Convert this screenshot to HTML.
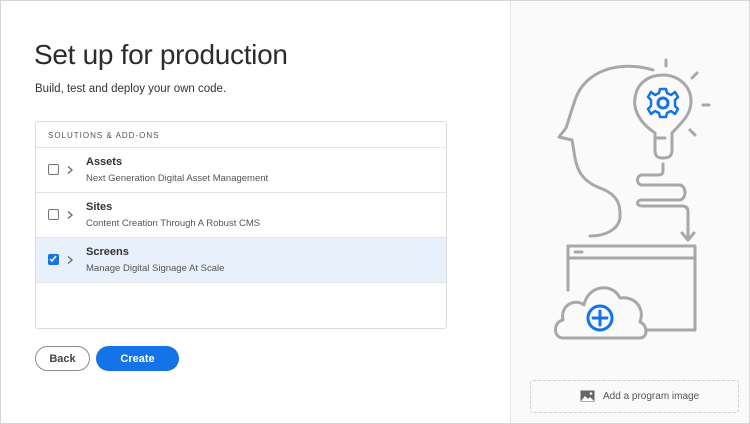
<!DOCTYPE html>
<html><head><meta charset="utf-8"><style>
*{box-sizing:border-box;margin:0;padding:0}
body{width:750px;height:424px;font-family:"Liberation Sans",sans-serif;background:#fff;position:relative;overflow:hidden;color:#2c2c2c}
.frame{position:absolute;left:0;top:0;width:750px;height:424px;border:1px solid #d6d6d6}
.right{position:absolute;left:510px;top:0;width:240px;height:424px;background:#fafafa;border-left:1px solid #e4e4e4}
h1{position:absolute;left:34px;top:39px;font-size:28px;font-weight:300;color:#2c2c2c;letter-spacing:-0.3px}
.sub{position:absolute;left:35px;top:83px;font-size:11.5px;color:#333}
.box{position:absolute;left:35px;top:121px;width:412px;height:208px;border:1px solid #dcdcdc;border-radius:3px;overflow:hidden}
.hd{height:26px;border-bottom:1px solid #e4e4e4;font-size:8px;letter-spacing:1px;color:#555;padding:9px 0 0 12px}
.row{height:45px;border-bottom:1px solid #e4e4e4;position:relative}
.row.sel{background:#e7f0fb}
.cb{position:absolute;left:12px;top:16px;width:11px;height:11px;border:1.5px solid #757575;border-radius:2px;background:#fff}
.sel .cb{background:#1473e6;border-color:#1473e6}
.chev{position:absolute;left:30px;top:17px}
.t{position:absolute;left:50px;top:8px;font-size:11px;font-weight:bold;color:#333}
.d{position:absolute;left:50px;top:25px;font-size:9.5px;color:#555}
.btn{position:absolute;top:346px;height:25px;border-radius:13px;font-size:11px;font-weight:bold;display:flex;align-items:center;justify-content:center}
.back{left:35px;width:55px;border:1.5px solid #8a8a8a;color:#444}
.create{left:96px;width:83px;background:#1473e6;color:#fff}
.dash{position:absolute;left:530px;top:380px;width:209px;height:33px;border:1px dashed #cfcfcf;border-radius:3px;font-size:10px;color:#555;padding:10px 0 0 72px}
</style></head><body>
<div class="right"></div>
<div class="frame"></div>
<h1>Set up for production</h1>
<div class="sub">Build, test and deploy your own code.</div>
<div class="box">
<div class="hd">SOLUTIONS &amp; ADD-ONS</div>
<div class="row"><div class="cb"></div><svg class="chev" width="8" height="10"><path d="M2 1.5L6 5 2 8.5" stroke="#6e6e6e" stroke-width="1.4" fill="none"/></svg><div class="t">Assets</div><div class="d">Next Generation Digital Asset Management</div></div>
<div class="row"><div class="cb"></div><svg class="chev" width="8" height="10"><path d="M2 1.5L6 5 2 8.5" stroke="#6e6e6e" stroke-width="1.4" fill="none"/></svg><div class="t">Sites</div><div class="d">Content Creation Through A Robust CMS</div></div>
<div class="row sel"><div class="cb"><svg width="8" height="8" viewBox="0 0 8 8" style="position:absolute;left:0;top:0"><path d="M1 4l2 2 4-5" stroke="#fff" stroke-width="1.5" fill="none"/></svg></div><svg class="chev" width="8" height="10"><path d="M2 1.5L6 5 2 8.5" stroke="#6e6e6e" stroke-width="1.4" fill="none"/></svg><div class="t">Screens</div><div class="d">Manage Digital Signage At Scale</div></div>
</div>
<div class="btn back">Back</div>
<div class="btn create">Create</div>
<svg style="position:absolute;left:0;top:0" width="750" height="424" fill="none" stroke="#a8a8a8" stroke-width="3" stroke-linecap="round" stroke-linejoin="round">
<path d="M653 70 C620 60 585 70 575 100 L566 128 L559 137 L572 140 C576 160 574 178 600 188 C622 196 620 210 620 218 C618 230 605 236 590 236"/>
<path d="M655 133 C640 123 633 110 635 98 C637 82 650 75 663 75 C678 75 691 86 691 101 C691 115 682 122 672 133 L672 150 C672 157 668 158 663 158 C658 158 655 157 655 150 Z"/>
<path d="M655 138 L665 138"/>
<path d="M666 60 L666 66 M692 78 L697 73 M703 105 L709 105 M690 130 L695 135"/>
<path d="M663 164 L663 171 C663 175 660 175 657 175 L642 175 C636 175 636 185 642 185 L679 185 C687 185 687 200 679 200 L642 200 C636 200 636 206 642 206 L682 206 C686 206 688 208 688 212 L688 238"/>
<path d="M682 233 L688 240 L694 233"/>
<path d="M568 290 L568 246 L695 246 L695 330 L648 330"/>
<path d="M568 258 L695 258 M575 252 L582 252"/>
<path d="M563 338 C553 338 553 322 563 320 C560 305 575 298 584 305 C588 285 612 282 620 298 C635 296 645 308 640 322 C648 325 648 338 640 338 Z" fill="#fafafa"/>
<g stroke="#1473e6" stroke-width="3"><circle cx="600" cy="318" r="12"/><path d="M600 311 L600 325 M593 318 L607 318"/>
<circle cx="663" cy="103" r="5"/>
<path d="M660 89 L666 89 L667 93 L671 95 L675 92 L678 97 L675 100 L675 106 L678 109 L675 114 L671 111 L667 113 L666 117 L660 117 L659 113 L655 111 L651 114 L648 109 L651 106 L651 100 L648 97 L651 92 L655 95 L659 93 Z" stroke-width="2.5"/></g>
</svg>
<div class="dash">Add a program image</div>
<svg style="position:absolute;left:580px;top:390px" width="15" height="12"><rect x="0.5" y="0.5" width="14" height="11" fill="#666"/><path d="M1 11 L5 6 L8 9 L10 7 L14 11Z" fill="#fff"/><circle cx="11" cy="3.5" r="1.3" fill="#fff"/></svg>
</body></html>
